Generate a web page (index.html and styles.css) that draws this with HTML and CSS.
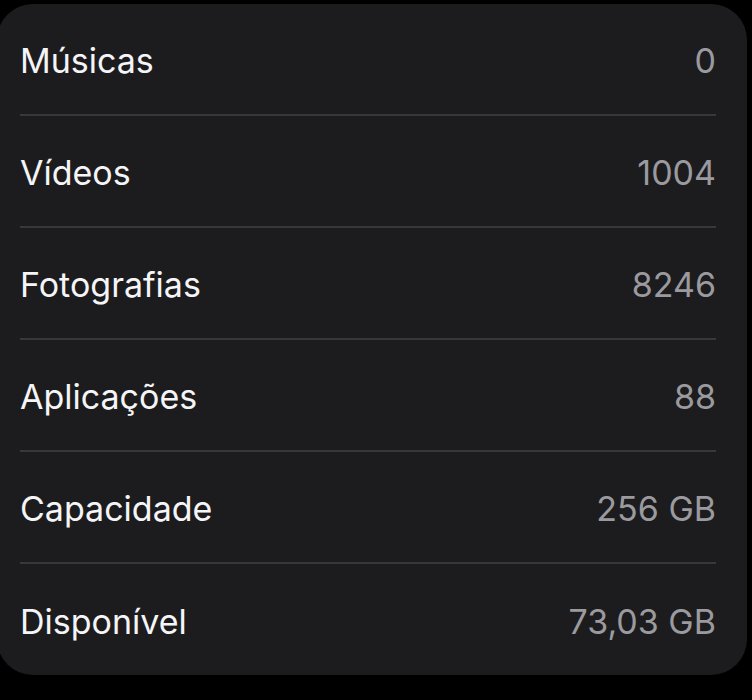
FILE: index.html
```html
<!DOCTYPE html>
<html lang="pt">
<head>
    <meta charset="UTF-8">
    <meta name="viewport" content="width=device-width, initial-scale=1.0">
    <title>Informações</title>
    <link rel="stylesheet" href="styles.css">
</head>
<body>
    <!-- Info list -->
    <div class="card">
        <div class="row"><span class="label">Músicas</span><span class="value">0</span></div>
        <div class="row"><span class="label">Vídeos</span><span class="value">1004</span></div>
        <div class="row"><span class="label">Fotografias</span><span class="value">8246</span></div>
        <div class="row"><span class="label">Aplicações</span><span class="value">88</span></div>
        <div class="row"><span class="label">Capacidade</span><span class="value">256 GB</span></div>
        <div class="row"><span class="label">Disponível</span><span class="value">73,03 GB</span></div>
    </div>
</body>
</html>
```

FILE: styles.css
```css
/* General */
body {
    margin: 0;
    padding: 0;
    background-color: #000000;
    font-family: 'Inter', 'Roboto', sans-serif;
}

/* Card */
.card {
    margin: 4px 5px 0 -3px;
    padding: 0 31px 0 23px;
    background-color: #1c1c1e;
    border-radius: 36px;
}

.row {
    display: flex;
    align-items: center;
    justify-content: space-between;
    height: 107px;
    padding-top: 3px;
    border-bottom: 2px solid #38383a;
    font-size: 34px;
    font-weight: 400;
}

.row:last-child {
    height: 108px;
    border-bottom: none;
}

.label {
    color: #f5f5f7;
}

.value {
    color: #9a9a9f;
}
```
